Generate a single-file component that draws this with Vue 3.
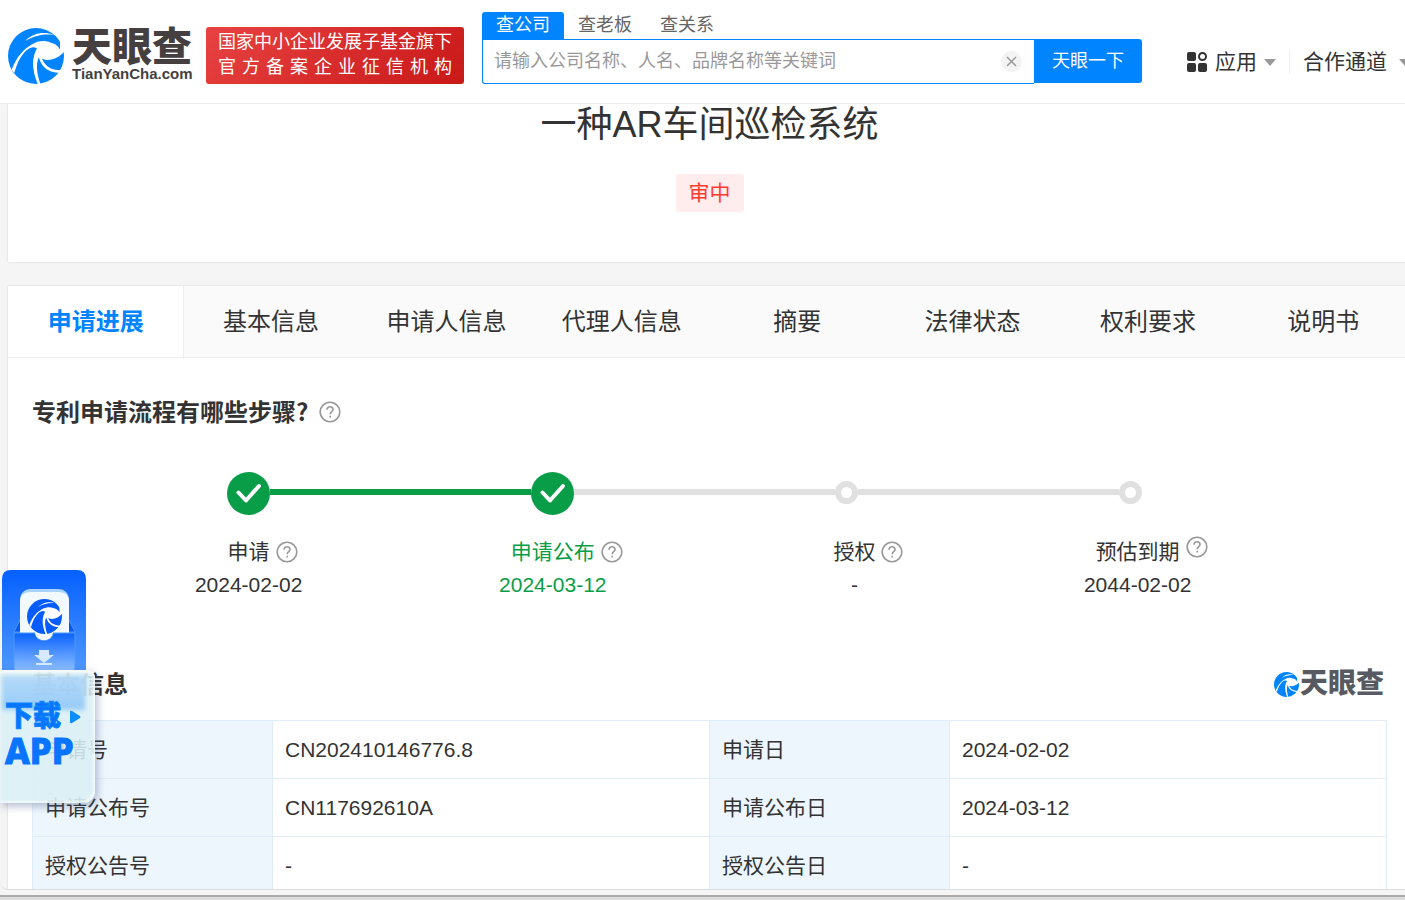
<script setup>
import { ref } from 'vue'

const keyword = ref('')
const searchTypes = ['查公司', '查老板', '查关系']
const tabs = ['申请进展', '基本信息', '申请人信息', '代理人信息', '摘要', '法律状态', '权利要求', '说明书']
const steps = [
  { name: '申请', date: '2024-02-02', done: true, line: 'passed' },
  { name: '申请公布', date: '2024-03-12', done: true, current: true, line: 'ahead' },
  { name: '授权', date: '-', line: 'ahead' },
  { name: '预估到期', date: '2044-02-02', raised: true },
]
const rows = [
  ['申请号', 'CN202410146776.8', '申请日', '2024-02-02'],
  ['申请公布号', 'CN117692610A', '申请公布日', '2024-03-12'],
  ['授权公告号', '-', '授权公告日', '-'],
]
</script>

<template>
  <div class="page">
    <svg class="defs" aria-hidden="true">
      <symbol id="swirl" viewBox="12 12 168 168">
        <circle cx="96" cy="96" r="84" fill="currentColor" />
        <g fill="#fff">
          <path d="M168 77C161 62 145 54 126 56C111 58 103 68 103 82C103 99 113 108 131 108C152 107 169 97 181 82L196 70L168 46Z" />
          <path d="M23 137C39 97 61 72 90 58C105 51 122 48 140 56C120 59 108 66 103 80C97 66 82 67 68 79C52 93 41 113 31 147Z" />
          <path d="M64 50C88 28 117 21 152 33C121 29 96 34 64 50Z" />
          <path d="M104 66C83 94 81 133 102 182L109 180C95 139 96 111 109 91Z" />
          <path d="M101 85C107 125 127 146 169 147L173 139C139 139 121 125 112 99Z" />
        </g>
      </symbol>
      <symbol id="help" viewBox="0 0 22 22">
        <g fill="none" stroke="#999" stroke-width="1.6">
          <circle cx="11" cy="11" r="9.8" />
          <path d="M8 8.8C8 6.9 9.2 5.8 11 5.8S14 6.9 14 8.5C14 10.7 11.2 10.7 11.2 13.3M11.2 14.7V16.4" />
        </g>
      </symbol>
    </svg>

    <header class="header">
      <a class="brand" href="#" aria-label="天眼查首页">
        <svg class="brand-mark"><use href="#swirl" /></svg>
        <span class="brand-text">
          <strong>天眼查</strong>
          <small>TianYanCha.com</small>
        </span>
      </a>
      <p class="slogan">
        <span>国家中小企业发展子基金旗下</span>
        <span class="spread">官 方 备 案 企 业 征 信 机 构</span>
      </p>
      <form class="search" @submit.prevent>
        <div class="search-types">
          <button v-for="(t, i) in searchTypes" :key="t" type="button" :class="{ on: i === 0 }">{{ t }}</button>
        </div>
        <div class="search-row">
          <div class="search-box">
            <input v-model="keyword" type="text" aria-label="搜索关键词" placeholder="请输入公司名称、人名、品牌名称等关键词" />
            <button class="clear" type="button" aria-label="清空" @click="keyword = ''">
              <svg viewBox="0 0 21 21"><path d="M6 6L15 15M15 6L6 15" stroke="#999" stroke-width="1.5" /></svg>
            </button>
          </div>
          <button class="submit" type="submit">天眼一下</button>
        </div>
      </form>
      <nav class="nav">
        <a href="#">
          <svg class="apps" viewBox="0 0 20 20">
            <g fill="#333">
              <rect width="9" height="9" rx="2" />
              <rect y="11" width="9" height="9" rx="2" />
              <rect x="11" y="11" width="9" height="9" rx="2" />
            </g>
            <circle cx="15.5" cy="4.5" r="3.5" fill="none" stroke="#333" stroke-width="2" />
          </svg>
          <span>应用</span>
          <i class="caret"></i>
        </a>
        <a class="partner" href="#">
          <span>合作通道</span>
          <i class="caret"></i>
        </a>
      </nav>
    </header>

    <main class="content">
      <section class="card title-card">
        <h1>一种AR车间巡检系统</h1>
        <span class="tag">审中</span>
      </section>

      <section class="card detail-card">
        <nav class="tabs">
          <a v-for="(t, i) in tabs" :key="t" href="#" :class="{ on: i === 0 }">{{ t }}</a>
        </nav>
        <div class="detail">
          <div class="heading">
            <h2>专利申请流程有哪些步骤?</h2>
            <button class="help" type="button" aria-label="说明"><svg><use href="#help" /></svg></button>
          </div>

          <ol class="steps">
            <li v-for="s in steps" :key="s.name" :class="{ done: s.done, current: s.current }">
              <div class="track">
                <svg v-if="s.done" class="check" viewBox="0 0 43 43">
                  <circle cx="21.5" cy="21.5" r="21.5" fill="#0a9d48" />
                  <path d="M11.5 20.5L19 28.5L32 14" fill="none" stroke="#fff" stroke-width="4" stroke-linecap="round" stroke-linejoin="round" />
                </svg>
                <span v-else class="ring"></span>
                <span v-if="s.line" class="line" :class="s.line"></span>
              </div>
              <div class="caption">
                <div class="name">
                  <span>{{ s.name }}</span>
                  <button class="help" :class="{ raised: s.raised }" type="button" :aria-label="s.name + '说明'"><svg><use href="#help" /></svg></button>
                </div>
                <div class="date">{{ s.date }}</div>
              </div>
            </li>
          </ol>

          <div class="heading basic">
            <h2>基本信息</h2>
            <span class="watermark">
              <svg><use href="#swirl" /></svg>
              <strong>天眼查</strong>
            </span>
          </div>
          <table>
            <tbody>
              <tr v-for="r in rows" :key="r[0]">
                <th scope="row">{{ r[0] }}</th>
                <td>{{ r[1] }}</td>
                <th scope="row">{{ r[2] }}</th>
                <td>{{ r[3] }}</td>
              </tr>
            </tbody>
          </table>
        </div>
      </section>
    </main>
    <div class="bottom-edge"></div>

    <a class="download" href="#">
      <svg class="download-art" viewBox="0 0 84 101">
        <defs>
          <linearGradient id="panel" x1="0" y1="0" x2="0" y2="1">
            <stop offset="0" stop-color="#0560ff" />
            <stop offset="1" stop-color="#4e98ff" />
          </linearGradient>
          <linearGradient id="pocket" x1="0" y1="0" x2="0" y2="1">
            <stop offset="0" stop-color="#0a63ff" />
            <stop offset="1" stop-color="#8fc0ff" />
          </linearGradient>
        </defs>
        <path d="M0 101V9Q0 0 9 0H75Q84 0 84 9V101Z" fill="url(#panel)" />
        <path d="M12 62L19 48H66L73 62Z" fill="#0758f0" stroke="#4b95ff" />
        <rect x="18" y="19" width="49" height="50" rx="10" fill="#a9d4ff" />
        <path d="M18 63V32Q18 22 28 22H57Q67 22 67 32V63Z" fill="#f2f9ff" />
        <path d="M12 101V63H33C34 73 50 73 51 63H73V101Z" fill="url(#pocket)" stroke="#4f98ff" />
        <path d="M33 62H51C50 73 34 73 33 62Z" fill="#f2f9ff" />
        <svg x="25" y="29" width="35" height="35" color="#075cff"><use href="#swirl" /></svg>
        <path d="M37 80H47V85H52L42 93L32 85H37ZM34 93H50V95H34Z" fill="#d7eaff" />
      </svg>
      <span class="download-glass">
        <span class="download-line">下载 <svg viewBox="0 0 12 14"><path d="M1 2Q1 0 3 1L11 6Q12 7 11 8L3 13Q1 14 1 12Z" fill="#0a8dff" /></svg></span>
        <span class="download-app">APP</span>
      </span>
    </a>
  </div>
</template>

<style>
html,
body {
  margin: 0;
  overflow: hidden;
}
</style>

<style scoped>
.page {
  position: relative;
  display: flex;
  flex-direction: column;
  height: 100vh;
  overflow: hidden;
  background: #f5f5f5;
  color: #333;
  font-family: "Liberation Sans", "Noto Sans CJK SC", sans-serif;
  font-size: 21px;
}
.page * {
  box-sizing: border-box;
}
.defs {
  position: absolute;
  width: 0;
  height: 0;
}
button {
  padding: 0;
  border: 0;
  background: none;
  color: inherit;
  font: inherit;
  cursor: pointer;
}
a {
  color: inherit;
  text-decoration: none;
}
h1,
h2,
p,
ol {
  margin: 0;
  padding: 0;
}

.header {
  flex: none;
  display: flex;
  align-items: flex-start;
  height: 104px;
  padding: 12px 0 0 8px;
  border-bottom: 1px solid #efefef;
  background: #fff;
}
.brand {
  flex: none;
  display: flex;
  gap: 8px;
  width: 198px;
  margin-top: 16px;
}
.brand-mark {
  width: 56px;
  height: 56px;
  color: #0084ff;
}
.brand-text {
  display: flex;
  flex-direction: column;
  color: #453f3f;
  white-space: nowrap;
}
.brand-text strong {
  font-size: 40px;
  font-weight: 900;
  line-height: 38px;
}
.brand-text small {
  font-size: 15px;
  font-weight: bold;
  line-height: 16px;
}
.slogan {
  flex: none;
  display: flex;
  flex-direction: column;
  width: 258px;
  height: 57px;
  margin-top: 15px;
  padding: 3px 12px;
  border-radius: 3px;
  background: linear-gradient(135deg, #e84242, #c91818);
  color: #fff;
  font-size: 18px;
  line-height: 25px;
  white-space: nowrap;
}
.spread {
  text-align-last: justify;
}
.search {
  flex: none;
  width: 50%;
  max-width: 660px;
  margin-left: 18px;
}
.search-types {
  display: flex;
  font-size: 18px;
  line-height: 27px;
  color: #666;
}
.search-types button {
  width: 82px;
  height: 27px;
}
.search-types .on {
  border-radius: 3px 3px 0 0;
  background: #0084ff;
  color: #fff;
}
.search-row {
  display: flex;
}
.search-box {
  flex: 1;
  display: flex;
  align-items: center;
  height: 45px;
  padding: 0 12px 0 11px;
  border: 1px solid #0084ff;
  border-right: 0;
  border-radius: 0 0 0 3px;
}
.search-box input {
  flex: 1;
  min-width: 0;
  height: 40px;
  padding: 0;
  border: 0;
  outline: 0;
  background: none;
  font: inherit;
  font-size: 18px;
}
.search-box input::placeholder {
  color: #999;
  opacity: 1;
}
.clear {
  width: 21px;
  height: 21px;
  border-radius: 50%;
  background: #f3f3f3;
}
.clear svg {
  display: block;
}
.submit {
  width: 108px;
  height: 44px;
  padding-bottom: 4px;
  border-radius: 0 3px 3px 0;
  background: #0084ff;
  color: #fff;
  font-size: 18px;
}
.nav {
  flex: none;
  display: flex;
  margin: 38px 0 0 45px;
  line-height: 24px;
}
.nav a {
  display: flex;
  align-items: center;
}
.apps {
  width: 20px;
  height: 20px;
  margin-right: 8px;
}
.caret {
  margin-left: 7px;
  border: 6px solid transparent;
  border-top: 7px solid #999;
  border-bottom: 0;
}
.nav .partner {
  margin-left: 13px;
  padding-left: 13px;
  border-left: 1px solid #eee;
}
.partner .caret {
  margin-left: 12px;
}

.content {
  flex: 1;
  min-height: 0;
  overflow: hidden;
  padding-left: 8px;
  border-bottom: 1px solid #ddd;
  border-bottom-left-radius: 8px;
}
.card {
  margin-right: -6px;
  background: #fff;
  box-shadow: 0 0 2px rgba(0, 0, 0, 0.15);
}
.title-card {
  display: flex;
  flex-direction: column;
  align-items: center;
  padding-bottom: 50px;
}
h1 {
  font-size: 36px;
  font-weight: normal;
  line-height: 42px;
}
.tag {
  margin-top: 28px;
  padding: 0 13px;
  border-radius: 3px;
  background: #ffeded;
  color: #ff3b30;
  line-height: 38px;
}
.detail-card {
  margin-top: 24px;
}
.tabs {
  display: flex;
  height: 72px;
  border-bottom: 1px solid #eee;
  background: #fafafa;
  font-size: 24px;
  line-height: 72px;
}
.tabs a {
  flex: 1 1 0;
  height: 71px;
  text-align: center;
}
.tabs .on {
  background: #fff;
  box-shadow: 1px 0 0 #eee;
  color: #0084ff;
  font-weight: bold;
}
.detail {
  padding: 38px 24px 0;
}
.heading {
  display: flex;
  align-items: center;
  gap: 11px;
}
h2 {
  padding-bottom: 2px;
  font-family: "Noto Sans CJK SC", sans-serif;
  font-size: 24px;
  font-weight: bold;
  line-height: 30px;
}
.help,
.help svg {
  display: block;
  width: 22px;
  height: 22px;
}
.steps {
  display: grid;
  grid-template-columns: 304fr 304fr 283fr 38fr;
  margin-top: 44px;
  padding: 0 17% 0 14.4%;
  list-style: none;
}
.steps li {
  min-width: 0;
}
.track {
  display: flex;
  align-items: center;
  height: 40px;
}
.check {
  flex: none;
  width: 43px;
  height: 43px;
  margin-top: 2px;
}
.ring {
  flex: none;
  width: 23px;
  height: 23px;
  border: 6px solid #e0e0e0;
  border-radius: 50%;
}
.line {
  flex: 1;
  height: 6px;
}
.passed {
  background: #0a9d48;
}
.ahead {
  background: #e0e0e0;
}
.caption {
  display: flex;
  flex-direction: column;
  align-items: center;
  width: 38px;
  margin-top: 24px;
  white-space: nowrap;
}
.done .caption {
  width: 43px;
}
.current .caption {
  color: #0a9d48;
}
.name {
  display: flex;
  align-items: center;
  line-height: 32px;
}
.name .help {
  margin: 0 -28px 0 6px;
}
.name .raised {
  align-self: flex-start;
}
.date {
  line-height: 34px;
}
.basic {
  justify-content: space-between;
  margin-top: 66px;
}
.watermark {
  display: flex;
  align-items: center;
  gap: 1px;
  margin-right: 3px;
  color: #575a60;
}
.watermark svg {
  width: 25px;
  height: 25px;
  color: #0084ff;
}
.watermark strong {
  font-size: 28px;
  font-weight: 900;
  line-height: 32px;
}
table {
  width: 100%;
  margin-top: 20px;
  border-collapse: collapse;
  table-layout: fixed;
}
th,
td {
  height: 58px;
  padding: 0 12px;
  border: 1px solid #e0edf8;
  font-weight: normal;
  text-align: left;
}
th {
  width: 240px;
  padding-bottom: 4px;
  background: #eef6fd;
}
.bottom-edge {
  flex: none;
  height: 10px;
  border-top: 5px solid #f5f5f5;
  background: #dcdcdc;
  box-shadow: inset 0 2px 0 #ababab;
}

.download {
  position: absolute;
  left: 0;
  bottom: 97px;
  width: 95px;
}
.download-art {
  display: block;
  width: 84px;
  height: 101px;
  margin-left: 2px;
}
.download-glass {
  position: relative;
  display: flex;
  flex-direction: column;
  height: 133px;
  margin-top: -1px;
  padding: 30px 0 0 5px;
  border-radius: 0 8px 12px 0;
  background: rgba(218, 239, 245, 0.88);
  box-shadow: 2px 3px 8px rgba(60, 80, 130, 0.4), inset 0 3px 3px rgba(255, 255, 255, 0.8), inset -2px -2px 3px rgba(255, 255, 255, 0.6);
  color: #0874ff;
}
.download-glass::before {
  content: "";
  position: absolute;
  top: 6px;
  left: 2px;
  width: 83px;
  height: 34px;
  background: linear-gradient(rgba(172, 214, 248, 0.85), rgba(140, 196, 248, 0.85));
  filter: blur(2px);
}
.download-line {
  position: relative;
  display: flex;
  align-items: center;
  gap: 8px;
  font-size: 28px;
  font-weight: 900;
  line-height: 34px;
  -webkit-text-stroke: 1px #0a84ff;
}
.download-line svg {
  width: 12px;
  height: 14px;
}
.download-app {
  position: relative;
  font-family: "Noto Sans", sans-serif;
  font-size: 35px;
  font-weight: 800;
  line-height: 34px;
  -webkit-text-stroke: 1px #0874ff;
}
</style>
